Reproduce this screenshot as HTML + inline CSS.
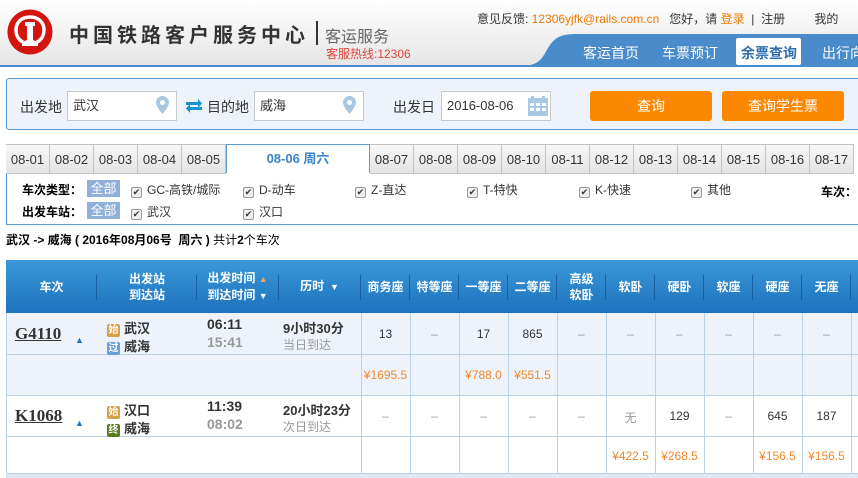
<!DOCTYPE html>
<html><head><meta charset="utf-8"><style>
*{margin:0;padding:0;box-sizing:border-box}
body{width:858px;height:478px;overflow:hidden;background:#fff;font-family:"Liberation Sans","Noto Sans CJK SC",sans-serif;font-size:12px;color:#333;position:relative}
.a{position:absolute;white-space:nowrap}
.hdr{position:absolute;left:0;top:0;width:858px;height:65px;background:linear-gradient(#fff,#e6e6e6)}
.inp{position:absolute;top:91px;height:30px;background:#fff;border:1px solid #c9c9c9;font-size:13px;line-height:28px;padding-left:5px;color:#333}
.btn{position:absolute;top:91px;height:30px;width:122px;background:#fb8800;border-radius:3px;color:#fff;font-size:14px;text-align:center;line-height:30px}
.tab{position:absolute;top:144px;height:30px;width:44px;border:1px solid #c3c3c3;border-left:none;background:linear-gradient(#f7f7f7,#e4e4e4);text-align:center;line-height:29px;font-size:13px;color:#333}
.cb{display:inline-block;width:11px;height:11px;border:1px solid #999;border-radius:2px;background:#eee;vertical-align:-1px;margin-right:5px;font-size:9px;line-height:9px;text-align:center;color:#333}
.all{position:absolute;left:87px;width:33px;height:17px;background:#8fb0d8;color:#fff;text-align:center;line-height:17px;font-size:13px}
.th{position:absolute;top:260px;height:53px;color:#fff;font-weight:bold;font-size:12px;text-align:center;display:flex;flex-direction:column;align-items:center;justify-content:center;line-height:16px;white-space:nowrap}
.sep{position:absolute;top:275px;width:1px;height:25px;background:#1b5fa3}
.vl{position:absolute;width:1px;background:#b9d3e6}
.c{position:absolute;width:49px;text-align:center;font-size:12px}
.p{color:#f0892a}
.g{color:#999}
.ic{display:inline-block;width:13px;height:13px;font-size:10px;line-height:13px;text-align:center;color:#fff;border-radius:2px;margin-right:4px;vertical-align:0}
</style></head><body>
<div class="hdr"></div>
<div class="a" style="left:0;top:65px;width:858px;height:2px;background:#4a8ccb"></div>
<svg class="a" style="left:7px;top:9px" width="46" height="46" viewBox="0 0 46 46">
<circle cx="23" cy="23" r="22.5" fill="#d3140f"/>
<path d="M16 33 C10 30 9 24 9 21 C9 13 15 8 23 8 C31 8 37 13 37 21 C37 24 36 30 30 33" fill="none" stroke="#fff" stroke-width="3.5"/>
<path d="M18 13 L28 13 L28 17 L26 17 L26 31 L31 33 L31 37 L15 37 L15 33 L20 31 L20 17 L18 17 Z" fill="#fff"/>
</svg>
<div class="a" style="left:69px;top:19px;font-size:20px;font-weight:bold;color:#333;letter-spacing:4px">中国铁路客户服务中心</div>
<div class="a" style="left:316px;top:21px;width:2px;height:24px;background:#333"></div>
<div class="a" style="left:325px;top:23px;font-size:16px;color:#666">客运服务</div>
<div class="a" style="left:326px;top:45px;font-size:12px;color:#e0423a">客服热线:12306</div>
<div class="a" style="left:477px;top:10px;font-size:12px;color:#333">意见反馈: <span style="color:#f07800">12306yjfk@rails.com.cn</span>&nbsp;&nbsp; 您好，请 <span style="color:#f07800">登录</span> &nbsp;|&nbsp; 注册 <span style="margin-left:26px">我的</span></div>
<svg class="a" style="left:520px;top:34px" width="338" height="32"><path d="M0 32 C20 32 22 24 28 14 C34 4 40 0 56 0 L338 0 L338 32 Z" fill="#4a8ccb"/></svg>
<div class="a" style="left:583px;top:43px;font-size:14px;color:#fff">客运首页</div>
<div class="a" style="left:662px;top:43px;font-size:14px;color:#fff">车票预订</div>
<div class="a" style="left:736px;top:38px;width:65px;height:27px;background:#fff;border-radius:2px"></div>
<div class="a" style="left:741px;top:43px;font-size:14px;color:#2c6fae;font-weight:bold">余票查询</div>
<div class="a" style="left:822px;top:43px;font-size:14px;color:#fff">出行向</div>
<div class="a" style="left:6px;top:78px;width:860px;height:52px;background:#eef3fb;border:1px solid #5a9bd0;border-radius:3px"></div>
<div class="a" style="left:20px;top:97px;font-size:14px;color:#333">出发地</div>
<div class="inp" style="left:67px;width:110px">武汉</div>
<svg class="a" style="left:156px;top:96px" width="13" height="19"><path d="M6.5 0 C10 0 13 3 13 6.5 C13 11 6.5 18 6.5 18 C6.5 18 0 11 0 6.5 C0 3 3 0 6.5 0Z" fill="#a8c8e4"/><circle cx="6.5" cy="6.5" r="2.5" fill="#fff"/></svg>
<svg class="a" style="left:185px;top:99px" width="18" height="14"><path d="M1 6 L1 3 L13 3 L13 0 L17 4.5 L13 9 L13 6 Z M17 8 L17 11 L5 11 L5 14 L1 9.5 L5 5 L5 8 Z" fill="#1793d1"/></svg>
<div class="a" style="left:207px;top:97px;font-size:14px;color:#333">目的地</div>
<div class="inp" style="left:254px;width:110px">威海</div>
<svg class="a" style="left:343px;top:96px" width="13" height="19"><path d="M6.5 0 C10 0 13 3 13 6.5 C13 11 6.5 18 6.5 18 C6.5 18 0 11 0 6.5 C0 3 3 0 6.5 0Z" fill="#a8c8e4"/><circle cx="6.5" cy="6.5" r="2.5" fill="#fff"/></svg>
<div class="a" style="left:393px;top:97px;font-size:14px;color:#333">出发日</div>
<div class="inp" style="left:441px;width:110px;font-size:13px">2016-08-06</div>
<svg class="a" style="left:528px;top:96px" width="20" height="20"><rect x="0" y="2" width="20" height="18" fill="#a8c8e4"/><rect x="3" y="0" width="3" height="4" fill="#a8c8e4"/><rect x="14" y="0" width="3" height="4" fill="#a8c8e4"/><g fill="#fff"><rect x="2" y="7" width="4" height="3"/><rect x="8" y="7" width="4" height="3"/><rect x="14" y="7" width="4" height="3"/><rect x="2" y="12" width="4" height="3"/><rect x="8" y="12" width="4" height="3"/><rect x="14" y="12" width="4" height="3"/></g></svg>
<div class="btn" style="left:590px">查询</div>
<div class="btn" style="left:722px">查询学生票</div>
<div class="a" style="left:6px;top:144px;width:1px;height:30px;background:#c3c3c3"></div>
<div class="tab" style="left:6px">08-01</div>
<div class="tab" style="left:50px">08-02</div>
<div class="tab" style="left:94px">08-03</div>
<div class="tab" style="left:138px">08-04</div>
<div class="tab" style="left:182px">08-05</div>
<div class="a" style="left:226px;top:144px;width:144px;height:31px;background:#fff;border:1px solid #5a9bd0;border-bottom:none;text-align:center;line-height:28px;font-size:13px;font-weight:bold;color:#3a86c6">08-06 周六</div>
<div class="tab" style="left:370px">08-07</div>
<div class="tab" style="left:414px">08-08</div>
<div class="tab" style="left:458px">08-09</div>
<div class="tab" style="left:502px">08-10</div>
<div class="tab" style="left:546px">08-11</div>
<div class="tab" style="left:590px">08-12</div>
<div class="tab" style="left:634px">08-13</div>
<div class="tab" style="left:678px">08-14</div>
<div class="tab" style="left:722px">08-15</div>
<div class="tab" style="left:766px">08-16</div>
<div class="tab" style="left:810px">08-17</div>
<div class="a" style="left:6px;top:174px;width:860px;height:51px;border:1px solid #5a9bd0;border-top:none;border-right:none"></div>
<div class="a" style="left:226px;top:173px;width:144px;height:2px;background:#fff"></div>
<div class="a" style="left:22px;top:181px;font-weight:bold;font-size:12px;color:#000">车次类型：</div>
<div class="all" style="top:180px">全部</div>
<div class="a" style="left:131px;top:181px"><span class="cb">✔</span>GC-高铁/城际</div>
<div class="a" style="left:243px;top:181px"><span class="cb">✔</span>D-动车</div>
<div class="a" style="left:355px;top:181px"><span class="cb">✔</span>Z-直达</div>
<div class="a" style="left:467px;top:181px"><span class="cb">✔</span>T-特快</div>
<div class="a" style="left:579px;top:181px"><span class="cb">✔</span>K-快速</div>
<div class="a" style="left:691px;top:181px"><span class="cb">✔</span>其他</div>
<div class="a" style="left:821px;top:183px;font-weight:bold;color:#000">车次：</div>
<div class="a" style="left:22px;top:203px;font-weight:bold;font-size:12px;color:#000">出发车站：</div>
<div class="all" style="top:202px">全部</div>
<div class="a" style="left:131px;top:203px"><span class="cb">✔</span>武汉</div>
<div class="a" style="left:243px;top:203px"><span class="cb">✔</span>汉口</div>
<div class="a" style="left:6px;top:231px;font-size:12px;color:#000"><b>武汉 -&gt; 威海 ( 2016年08月06号&nbsp; 周六 )</b> 共计<b>2</b>个车次</div>
<div class="a" style="left:6px;top:260px;width:860px;height:53px;background:linear-gradient(#3b98d8,#1d72bd)"></div>
<div class="th" style="left:6px;width:91px">车次</div>
<div class="th" style="left:97px;width:100px"><div>出发站</div><div>到达站</div></div>
<div class="th" style="left:197px;width:81px"><div>出发时间 <span style="color:#f5a05a;font-size:9px">▲</span></div><div>到达时间 <span style="font-size:9px">▼</span></div></div>
<div class="th" style="left:278px;width:83px"><div>历时 <span style="font-size:9px">&nbsp;▼</span></div></div>
<div class="th" style="left:361px;width:49px">商务座</div>
<div class="th" style="left:410px;width:49px">特等座</div>
<div class="th" style="left:459px;width:49px">一等座</div>
<div class="th" style="left:508px;width:49px">二等座</div>
<div class="th" style="left:557px;width:49px"><div>高级</div><div>软卧</div></div>
<div class="th" style="left:606px;width:49px">软卧</div>
<div class="th" style="left:655px;width:49px">硬卧</div>
<div class="th" style="left:704px;width:49px">软座</div>
<div class="th" style="left:753px;width:49px">硬座</div>
<div class="th" style="left:802px;width:49px">无座</div>
<div class="sep" style="left:96px"></div><div class="sep" style="left:196px"></div><div class="sep" style="left:278px"></div><div class="sep" style="left:360px"></div><div class="sep" style="left:409px"></div><div class="sep" style="left:458px"></div><div class="sep" style="left:507px"></div><div class="sep" style="left:556px"></div><div class="sep" style="left:605px"></div><div class="sep" style="left:654px"></div><div class="sep" style="left:703px"></div><div class="sep" style="left:752px"></div><div class="sep" style="left:801px"></div><div class="sep" style="left:850px"></div>
<div class="a" style="left:6px;top:313px;width:860px;height:82px;background:#eef3fb"></div>
<div class="a" style="left:6px;top:313px;width:1px;height:162px;background:#b9d3e6"></div>
<div class="a" style="left:6px;top:354px;width:860px;height:1px;background:#b9d3e6"></div>
<div class="a" style="left:6px;top:395px;width:860px;height:1px;background:#b9d3e6"></div>
<div class="a" style="left:6px;top:436px;width:860px;height:1px;background:#b9d3e6"></div>
<div class="a" style="left:6px;top:473px;width:860px;height:5px;background:#dfe9f5;border-top:1px solid #b9d3e6"></div>
<div class="vl" style="left:361px;top:313px;height:160px"></div><div class="vl" style="left:410px;top:313px;height:160px"></div><div class="vl" style="left:459px;top:313px;height:160px"></div><div class="vl" style="left:508px;top:313px;height:160px"></div><div class="vl" style="left:557px;top:313px;height:160px"></div><div class="vl" style="left:606px;top:313px;height:160px"></div><div class="vl" style="left:655px;top:313px;height:160px"></div><div class="vl" style="left:704px;top:313px;height:160px"></div><div class="vl" style="left:753px;top:313px;height:160px"></div><div class="vl" style="left:802px;top:313px;height:160px"></div><div class="vl" style="left:851px;top:313px;height:160px"></div>
<div class="a" style="left:15px;top:324px;font-family:'Liberation Serif',serif;font-weight:bold;font-size:17px;text-decoration:underline;color:#333">G4110</div>
<div class="a" style="left:75px;top:335px;font-size:9px;color:#1a73c4">▲</div>
<div class="a" style="left:107px;top:318px;font-weight:bold;font-size:13px"><span class="ic" style="background:#d9a04a">始</span>武汉</div>
<div class="a" style="left:107px;top:336px;font-weight:bold;font-size:13px"><span class="ic" style="background:#6b9fdc">过</span>威海</div>
<div class="a" style="left:207px;top:316px;font-weight:bold;font-size:14px;color:#333">06:11</div>
<div class="a" style="left:207px;top:334px;font-weight:bold;font-size:14px;color:#999">15:41</div>
<div class="a" style="left:283px;top:318px;font-weight:bold;font-size:13px;color:#333">9小时30分</div>
<div class="a" style="left:283px;top:336px;font-size:12px;color:#999">当日到达</div>
<div class="c" style="left:361px;top:327px">13</div><div class="c g" style="left:410px;top:327px">–</div><div class="c" style="left:459px;top:327px">17</div><div class="c" style="left:508px;top:327px">865</div>
<div class="c g" style="left:557px;top:327px">–</div><div class="c g" style="left:606px;top:327px">–</div><div class="c g" style="left:655px;top:327px">–</div><div class="c g" style="left:704px;top:327px">–</div><div class="c g" style="left:753px;top:327px">–</div><div class="c g" style="left:802px;top:327px">–</div><div class="c g" style="left:851px;top:327px">–</div>
<div class="c p" style="left:361px;top:368px">¥1695.5</div><div class="c p" style="left:459px;top:368px">¥788.0</div><div class="c p" style="left:508px;top:368px">¥551.5</div>
<div class="a" style="left:15px;top:406px;font-family:'Liberation Serif',serif;font-weight:bold;font-size:17px;text-decoration:underline;color:#333">K1068</div>
<div class="a" style="left:75px;top:418px;font-size:9px;color:#1a73c4">▲</div>
<div class="a" style="left:107px;top:400px;font-weight:bold;font-size:13px"><span class="ic" style="background:#d9a04a">始</span>汉口</div>
<div class="a" style="left:107px;top:418px;font-weight:bold;font-size:13px"><span class="ic" style="background:#5c7a1e">终</span>威海</div>
<div class="a" style="left:207px;top:398px;font-weight:bold;font-size:14px;color:#333">11:39</div>
<div class="a" style="left:207px;top:416px;font-weight:bold;font-size:14px;color:#999">08:02</div>
<div class="a" style="left:283px;top:400px;font-weight:bold;font-size:13px;color:#333">20小时23分</div>
<div class="a" style="left:283px;top:418px;font-size:12px;color:#999">次日到达</div>
<div class="c g" style="left:361px;top:409px">–</div><div class="c g" style="left:410px;top:409px">–</div><div class="c g" style="left:459px;top:409px">–</div><div class="c g" style="left:508px;top:409px">–</div><div class="c g" style="left:557px;top:409px">–</div>
<div class="c g" style="left:606px;top:409px">无</div><div class="c" style="left:655px;top:409px">129</div><div class="c g" style="left:704px;top:409px">–</div><div class="c" style="left:753px;top:409px">645</div><div class="c" style="left:802px;top:409px">187</div>
<div class="c p" style="left:606px;top:449px">¥422.5</div><div class="c p" style="left:655px;top:449px">¥268.5</div><div class="c p" style="left:753px;top:449px">¥156.5</div><div class="c p" style="left:802px;top:449px">¥156.5</div>
</body></html>
